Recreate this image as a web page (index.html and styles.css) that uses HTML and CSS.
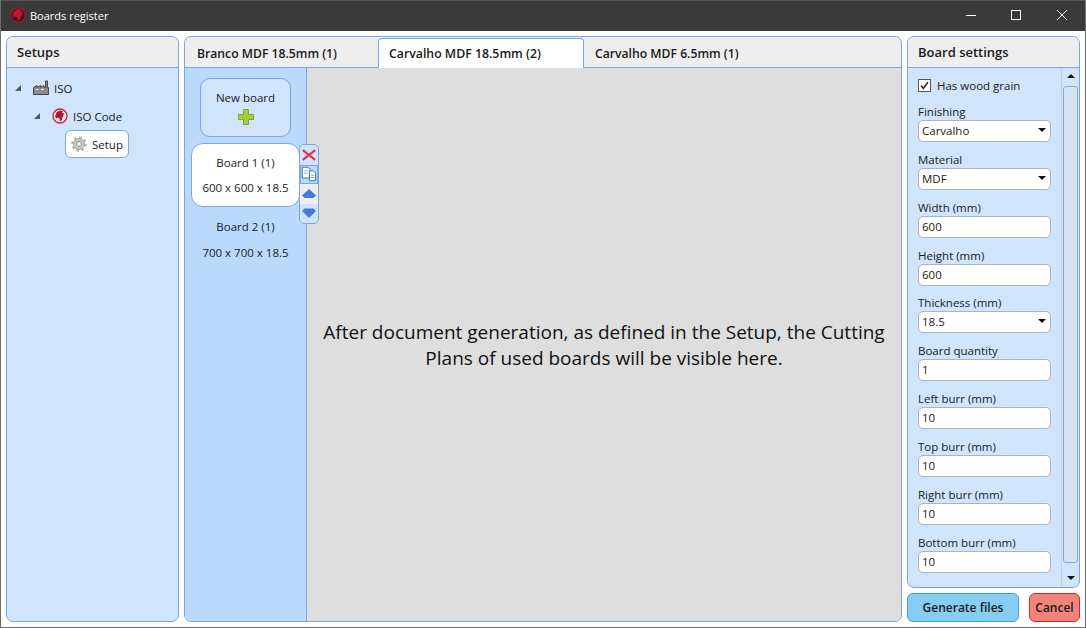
FILE: index.html
```html
<!DOCTYPE html>
<html lang="en">
<head>
<meta charset="utf-8">
<title>Boards register</title>
<link rel="stylesheet" href="styles.css">
</head>
<body>
<div class="window">
  <header class="titlebar">
    <svg class="logo" viewBox="0 0 16 16"><circle cx="8" cy="8" r="7.200" fill="#3a1c22" stroke="#b5122f" stroke-width="1.100"/><path d="M2.500 9 L4 4.500 L7.500 2 L11.500 2.500 L10.500 4.500 L13 5 L11.500 7 L12 8.500 L10.500 9.500 L10.500 12 L8 14 L7.500 10.500 L5.500 9.500 L4 10.500 Z" fill="#c2132f"/></svg>
    <span class="title">Boards register</span>
    <div class="winbtns">
      <svg class="winbtn" viewBox="0 0 46 30"><path d="M19 15.500H29" stroke="#fff" fill="none"/></svg>
      <svg class="winbtn" viewBox="0 0 46 30"><rect x="18.500" y="10.500" width="9" height="9" stroke="#fff" fill="none"/></svg>
      <svg class="winbtn" viewBox="0 0 46 30"><path d="M18 10 L28 20 M28 10 L18 20" stroke="#fff" fill="none"/></svg>
    </div>
  </header>
  <main class="main">
    <section class="panel setups">
      <h2 class="panel-head">Setups</h2>
      <div class="tree">
        <div class="node n0">
          <span class="tri"></span>
          <svg class="nicon" viewBox="0 0 18 16"><path d="M1.500 14.500V7.500L5 5.500V7.500L8.500 5.500V7.500L12 5.500V7.500H13.500V1H15.500V7.500H16.500V14.500Z" fill="#8c8c8c" stroke="#444"/><path d="M3.500 9.500h3M9 9.500h3" stroke="#eee"/></svg>
          <span>ISO</span>
        </div>
        <div class="node n1">
          <span class="tri"></span>
          <svg class="nicon" viewBox="0 0 16 16"><circle cx="8" cy="8" r="7" fill="#fbe9ec" stroke="#c22443" stroke-width="1.300"/><path d="M3 9 L4.500 4.500 L7.500 2.500 L11 3 L10 5 L12.500 5.500 L11 7.500 L11.500 8.500 L10 9.500 L10 12 L8 13.500 L7.500 10.500 L5.500 9.500 L4.500 10.500 Z" fill="#b5122f"/></svg>
          <span>ISO Code</span>
        </div>
        <div class="node n2">
          <svg class="gear" viewBox="0 0 16 16"><circle cx="8" cy="8" r="5.400" fill="#cfcfcf" stroke="#9a9a9a"/><circle cx="8" cy="8" r="6.600" fill="none" stroke="#aeaeae" stroke-width="2.200" stroke-dasharray="2.400 2.780"/><circle cx="8" cy="8" r="2.600" fill="#f0f0f0" stroke="#909090"/></svg>
          <span>Setup</span>
        </div>
      </div>
    </section>

    <section class="panel center">
      <nav class="tabs">
        <span class="tab">Branco MDF 18.5mm (1)</span>
        <span class="tab active">Carvalho MDF 18.5mm (2)</span>
        <span class="tab">Carvalho MDF 6.5mm (1)</span>
      </nav>
      <div class="center-body">
        <aside class="boards">
          <button class="new-board">
            <span>New board</span>
            <svg class="plus" viewBox="0 0 16 16"><path d="M5.500 .5H10.500V5.500H15.500V10.500H10.500V15.500H5.500V10.500H.5V5.500H5.500Z" fill="#a3cd3c" stroke="#7ea52a"/></svg>
          </button>
          <div class="board selected">
            <span>Board 1 (1)</span>
            <span>600 x 600 x 18.5</span>
            <div class="actions">
              <span class="act"><svg viewBox="0 0 16 16"><path d="M1 2.500L15 13.500M15 2.500L1 13.500" stroke="#ea3340" stroke-width="2.600" fill="none"/></svg></span>
              <span class="act blue"><svg class="copy" viewBox="0 0 18 18"><path d="M1.500 1.500H8L10.500 4V13.500H1.500Z" fill="#fff" stroke="#1f6fa8"/><path d="M9.500 5.500H14L16.500 8V16.500H9.500Z" fill="#fff" stroke="#1f6fa8"/><path d="M3.500 5.500H8M3.500 8H8M11 10.500H15M11 13H15" stroke="#6fa8d0"/></svg></span>
              <span class="act light"><svg viewBox="0 0 16 12"><path d="M8 1L15 7.500L12.500 10H3.500L1 7.500Z" fill="#4479de"/></svg></span>
              <span class="act"><svg viewBox="0 0 16 12"><path d="M3.500 1.500H12.500L15 4L8 11L1 4Z" fill="#4479de"/></svg></span>
            </div>
          </div>
          <div class="board">
            <span>Board 2 (1)</span>
            <span>700 x 700 x 18.5</span>
          </div>
        </aside>
        <div class="canvas">
          <p class="notice">After document generation, as defined in the Setup, the Cutting Plans of used boards will be visible here.</p>
        </div>
      </div>
    </section>

    <div class="right">
      <section class="panel settings">
        <h2 class="panel-head">Board settings</h2>
        <div class="settings-body">
          <form class="form">
            <label class="check">
              <span class="box"><svg viewBox="0 0 13 13"><path d="M2.500 6.500L5.200 10L10.500 2.500" fill="none" stroke="#222" stroke-width="1.800"/></svg></span>
              Has wood grain
            </label>
            <div class="field"><span class="lbl">Finishing</span><div class="input">Carvalho<i class="caret"></i></div></div>
            <div class="field"><span class="lbl">Material</span><div class="input">MDF<i class="caret"></i></div></div>
            <div class="field"><span class="lbl">Width (mm)</span><div class="input">600</div></div>
            <div class="field"><span class="lbl">Height (mm)</span><div class="input">600</div></div>
            <div class="field"><span class="lbl">Thickness (mm)</span><div class="input">18.5<i class="caret"></i></div></div>
            <div class="field"><span class="lbl">Board quantity</span><div class="input">1</div></div>
            <div class="field"><span class="lbl">Left burr (mm)</span><div class="input">10</div></div>
            <div class="field"><span class="lbl">Top burr (mm)</span><div class="input">10</div></div>
            <div class="field"><span class="lbl">Right burr (mm)</span><div class="input">10</div></div>
            <div class="field"><span class="lbl">Bottom burr (mm)</span><div class="input">10</div></div>
          </form>
          <div class="scrollbar">
            <i class="sb-up"></i>
            <div class="thumb"></div>
            <i class="sb-down"></i>
          </div>
        </div>
      </section>
      <div class="buttons">
        <button class="btn gen">Generate files</button>
        <button class="btn cancel">Cancel</button>
      </div>
    </div>
  </main>
</div>
</body>
</html>
```
FILE: styles.css
```css
* { box-sizing: border-box; }
html, body { margin: 0; padding: 0; }
body { width: 1086px; height: 628px; overflow: hidden; font-family: "Open Sans", "Noto Sans", sans-serif; font-size: 11.500px; color: #1a1a1a; }
.window { width: 1086px; height: 628px; display: flex; flex-direction: column; background: #fff; border: 1px solid #6e6e6e; border-top: 0; }
.titlebar { height: 31px; flex: none; background: #3a3a3a; display: flex; align-items: center; padding-left: 9px; color: #fff; border-top: 1px solid #555; }
.logo { width: 16px; height: 16px; margin: 0 4px 2px 0; }
.title { font-size: 11px; margin-bottom: 2px; }
.winbtns { margin-left: auto; margin-bottom: 2px; display: flex; }
.winbtn { width: 46px; height: 30px; }
.main { flex: 1; display: flex; gap: 5px; padding: 5px; min-height: 0; }
.panel { border: 1px solid #7ba6de; border-radius: 7px; background: #d0e4fc; overflow: hidden; }
.panel-head { margin: 0; height: 31px; line-height: 30px; padding-left: 10px; font-size: 13px; font-weight: 600; background: #eeeeee; border-bottom: 1px solid #7ba6de; }
.setups { width: 173px; flex: none; }
.tree { padding-top: 6px; }
.node { display: flex; align-items: center; height: 28px; }
.n0 { padding-left: 8px; }
.n1 { padding-left: 27px; }
.tri { width: 0; height: 0; border-style: solid; border-width: 0 0 6px 6px; border-color: transparent transparent #555 transparent; margin-right: 11px; }
.nicon { width: 18px; height: 16px; margin-right: 4px; }
.n2 { margin-left: 58px; width: 64px; height: 28px; padding-left: 5px; background: #fff; border: 1px solid #7ba6de; border-radius: 6px; }
.gear { width: 16px; height: 16px; margin-right: 5px; }
.center { width: 718px; flex: none; display: flex; flex-direction: column; background: #eeeeee; }
.tabs { height: 31px; flex: none; display: flex; border-bottom: 1px solid #7ba6de; padding-top: 1px; }
.tab { padding: 1px 10px 0 12px; line-height: 29px; font-weight: 600; font-size: 12.200px; height: 30px; }
.tab.active { background: #fff; border: 1px solid #7ba6de; border-bottom: 0; border-radius: 4px 4px 0 0; margin-left: 31px; width: 206px; padding: 0 0 0 10px; line-height: 29px; font-size: 12.300px; }
.tab.active + .tab { padding-left: 11px; }
.center-body { flex: 1; display: flex; min-height: 0; }
.boards { width: 122px; flex: none; background: #bbd9fd; border-right: 1px solid #7ba6de; padding: 10px 6px 0 6px; }
.new-board { display: flex; flex-direction: column; align-items: center; width: 91px; height: 59px; margin-left: 9px; padding: 11px 0 0; background: #d0e4fc; border: 1px solid #7ba6de; border-radius: 10px; font: inherit; color: inherit; }
.plus { width: 16px; height: 16px; margin-top: 4px; }
.board { position: relative; width: 109px; height: 64px; display: flex; flex-direction: column; align-items: center; justify-content: space-between; padding: 11px 0 11px; margin-top: 6px; }
.board + .board { margin-top: 0; padding: 12px 0 11px; }
.board.selected { background: #fff; border: 1px solid #7ba6de; border-radius: 12px; }
.actions { position: absolute; left: 107px; top: 0; width: 20px; display: flex; flex-direction: column; border: 1px solid #7ba6de; border-radius: 5px; overflow: hidden; background: #d0e4fc; }
.act { height: 19.500px; display: flex; align-items: center; justify-content: center; }
.act svg { width: 16px; height: 14px; }
.act svg.copy { width: 18px; height: 18px; }
.act.blue { background: #bbd9fd; border: 1px solid #7ba6de; }
.act.light { background: #eeeeee; }
.canvas { flex: 1; background: #dedede; display: flex; align-items: center; justify-content: center; padding: 0 14px; }
.notice { margin: 0; font-size: 19px; line-height: 26px; text-align: center; color: #111; }
.right { width: 173px; flex: none; display: flex; flex-direction: column; gap: 5px; }
.settings { flex: 1; display: flex; flex-direction: column; min-height: 0; }
.settings-body { flex: 1; display: flex; min-height: 0; }
.form { flex: 1; padding: 9px 0 0 10px; }
.check { display: flex; align-items: center; gap: 6px; height: 16px; margin-bottom: 11px; }
.box { width: 13px; height: 13px; border: 1px solid #555; background: #fff; display: block; flex: none; }
.box svg { display: block; width: 11px; height: 11px; }
.field { height: 47.850px; padding-top: 1px; }
.lbl { display: block; height: 15px; line-height: 14px; }
.input { position: relative; width: 133px; height: 22px; line-height: 20px; background: #fff; border: 1px solid #a9b3c4; border-radius: 5px; padding-left: 3px; }
.caret { position: absolute; right: 4px; top: 7px; width: 0; height: 0; border-style: solid; border-width: 4px 4px 0 4px; border-color: #111 transparent transparent transparent; }
.scrollbar { width: 18px; flex: none; position: relative; border-left: 1px solid #bcd0ea; display: flex; flex-direction: column; align-items: center; padding-top: 18px; padding-bottom: 24px; }
.thumb { flex: 1; width: 15px; background: #d3e2f5; border: 1px solid #8ea9cf; border-radius: 3px; }
.sb-up { position: absolute; top: 6px; left: 5px; width: 0; height: 0; border-style: solid; border-width: 0 4px 4px 4px; border-color: transparent transparent #111 transparent; }
.sb-down { position: absolute; bottom: 7px; left: 5px; width: 0; height: 0; border-style: solid; border-width: 4px 4px 0 4px; border-color: #111 transparent transparent transparent; }
.buttons { height: 29px; flex: none; display: flex; justify-content: space-between; }
.btn { font: inherit; font-size: 12px; font-weight: 600; border-radius: 6px; padding: 0; color: #1a1a1a; }
.gen { width: 112px; background: #87cdf1; border: 1px solid #3e9fe0; }
.cancel { width: 51px; background: #f2847a; border: 1px solid #dc2424; }
```
